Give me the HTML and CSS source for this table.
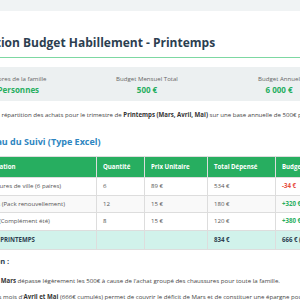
FILE: index.html
```html
<!DOCTYPE html>
<html lang="fr">
<head>
<meta charset="utf-8">
<title>Gestion Budget Habillement - Printemps</title>
<link rel="stylesheet" href="styles.css">
</head>
<body>
<div class="page">
  <div class="card">
    <h1 class="title">Gestion Budget Habillement - Printemps</h1>

    <div class="stats">
      <div class="stat">
        <div class="stat-label">Membres de la famille</div>
        <div class="stat-value">4 Personnes</div>
      </div>
      <div class="stat">
        <div class="stat-label">Budget Mensuel Total</div>
        <div class="stat-value">500 €</div>
      </div>
      <div class="stat">
        <div class="stat-label">Budget Annuel</div>
        <div class="stat-value">6 000 €</div>
      </div>
    </div>

    <p class="intro">Voici la répartition des achats pour le trimestre de <strong>Printemps (Mars, Avril, Mai)</strong> sur une base annuelle de 500€ par mois.</p>

    <h2 class="section-title">Tableau du Suivi (Type Excel)</h2>

    <table class="sheet">
      <colgroup>
        <col class="c-name">
        <col class="c-qty">
        <col class="c-unit">
        <col class="c-total">
        <col class="c-rest">
      </colgroup>
      <thead>
        <tr>
          <th>Désignation</th>
          <th>Quantité</th>
          <th>Prix Unitaire</th>
          <th>Total Dépensé</th>
          <th>Budget Restant</th>
        </tr>
      </thead>
      <tbody>
        <tr>
          <td>Chaussures de ville (6 paires)</td>
          <td>6</td>
          <td>89 €</td>
          <td>534 €</td>
          <td class="neg">-34 €</td>
        </tr>
        <tr class="alt">
          <td>T-shirts (Pack renouvellement)</td>
          <td>12</td>
          <td>15 €</td>
          <td>180 €</td>
          <td class="pos">+320 €</td>
        </tr>
        <tr>
          <td>Shorts (Complément été)</td>
          <td>8</td>
          <td>15 €</td>
          <td>120 €</td>
          <td class="pos">+380 €</td>
        </tr>
        <tr class="total">
          <td>TOTAL PRINTEMPS</td>
          <td></td>
          <td></td>
          <td>834 €</td>
          <td>666 € (Bonus)</td>
        </tr>
      </tbody>
    </table>

    <h3 class="conclusion">Solution :</h3>
    <ul class="notes">
      <li>En <strong>Mars</strong> dépasse légèrement les 500€ à cause de l'achat groupé des chaussures pour toute la famille.</li>
      <li>Les mois d'<strong>Avril et Mai</strong> (666€ cumulés) permet de couvrir le déficit de Mars et de constituer une épargne pour l'été.</li>
    </ul>
  </div>
</div>
</body>
</html>
```

FILE: styles.css
```css
body {
  margin: 0;
  background: #f0f3f4;
  font-family: "Open Sans", "Liberation Sans", sans-serif;
}

.page {
  padding-top: 11px;
  margin-left: -46px;
  width: 600px;
}

.card {
  background: #ffffff;
  padding: 24px 20px 20px;
}

.title {
  margin: 0;
  font-size: 12px;
  line-height: 16px;
  font-weight: 700;
  color: #2c3e50;
  padding-bottom: 6px;
  border-bottom: 1px solid #7dd8a2;
}

.stats {
  margin-top: 9px;
  background: #ecf0f1;
  padding: 7px 0 6px;
  display: grid;
  grid-template-columns: repeat(3, 82px);
  column-gap: 50px;
  text-align: center;
}

.stat-label {
  font-size: 6.1px;
  line-height: 10px;
  color: #666666;
  white-space: nowrap;
}

.stat-value {
  font-size: 8px;
  line-height: 11px;
  font-weight: 700;
  color: #27ae60;
  white-space: nowrap;
}

.intro {
  margin: 9px 0 0;
  padding-left: 6px;
  font-size: 6.1px;
  line-height: 10px;
  color: #444444;
  white-space: nowrap;
}

.intro strong {
  color: #333333;
}

.section-title {
  margin: 15px 0 0 -2px;
  font-size: 9px;
  line-height: 13px;
  font-weight: 700;
  color: #2e86c1;
}

.sheet {
  margin-top: 8px;
  margin-left: -2px;
  width: calc(100% + 2px);
  border-collapse: collapse;
  table-layout: fixed;
  font-size: 6.1px;
}

.c-name { width: 124px; }
.c-qty { width: 48px; }
.c-unit { width: 63px; }
.c-total { width: 68px; }

.sheet th {
  background: #27ae60;
  color: #ffffff;
  text-align: left;
  font-weight: 700;
  padding: 6px;
  line-height: 8px;
  border: 1px solid #dddddd;
  white-space: nowrap;
}

.sheet td {
  padding: 4px 6px;
  line-height: 8.5px;
  border: 1px solid #dddddd;
  color: #555555;
  white-space: nowrap;
}

.sheet .alt td {
  background: #f9f9f9;
}

.sheet .neg {
  color: #e74c3c;
  font-weight: 700;
}

.sheet .pos {
  color: #27ae60;
  font-weight: 700;
}

.sheet .total td {
  background: #d1f2eb;
  font-weight: 700;
  color: #2c3e50;
  padding: 5px 6px;
}

.conclusion {
  margin: 6px 0 0;
  font-size: 7.5px;
  line-height: 11px;
  font-weight: 700;
  color: #2c3e50;
}

.notes {
  margin: 9px 0 0;
  padding-left: 18px;
  font-size: 6.1px;
  color: #444444;
}

.notes li {
  line-height: 10px;
  margin-bottom: 6px;
  white-space: nowrap;
}

.notes strong {
  color: #333333;
}
```
